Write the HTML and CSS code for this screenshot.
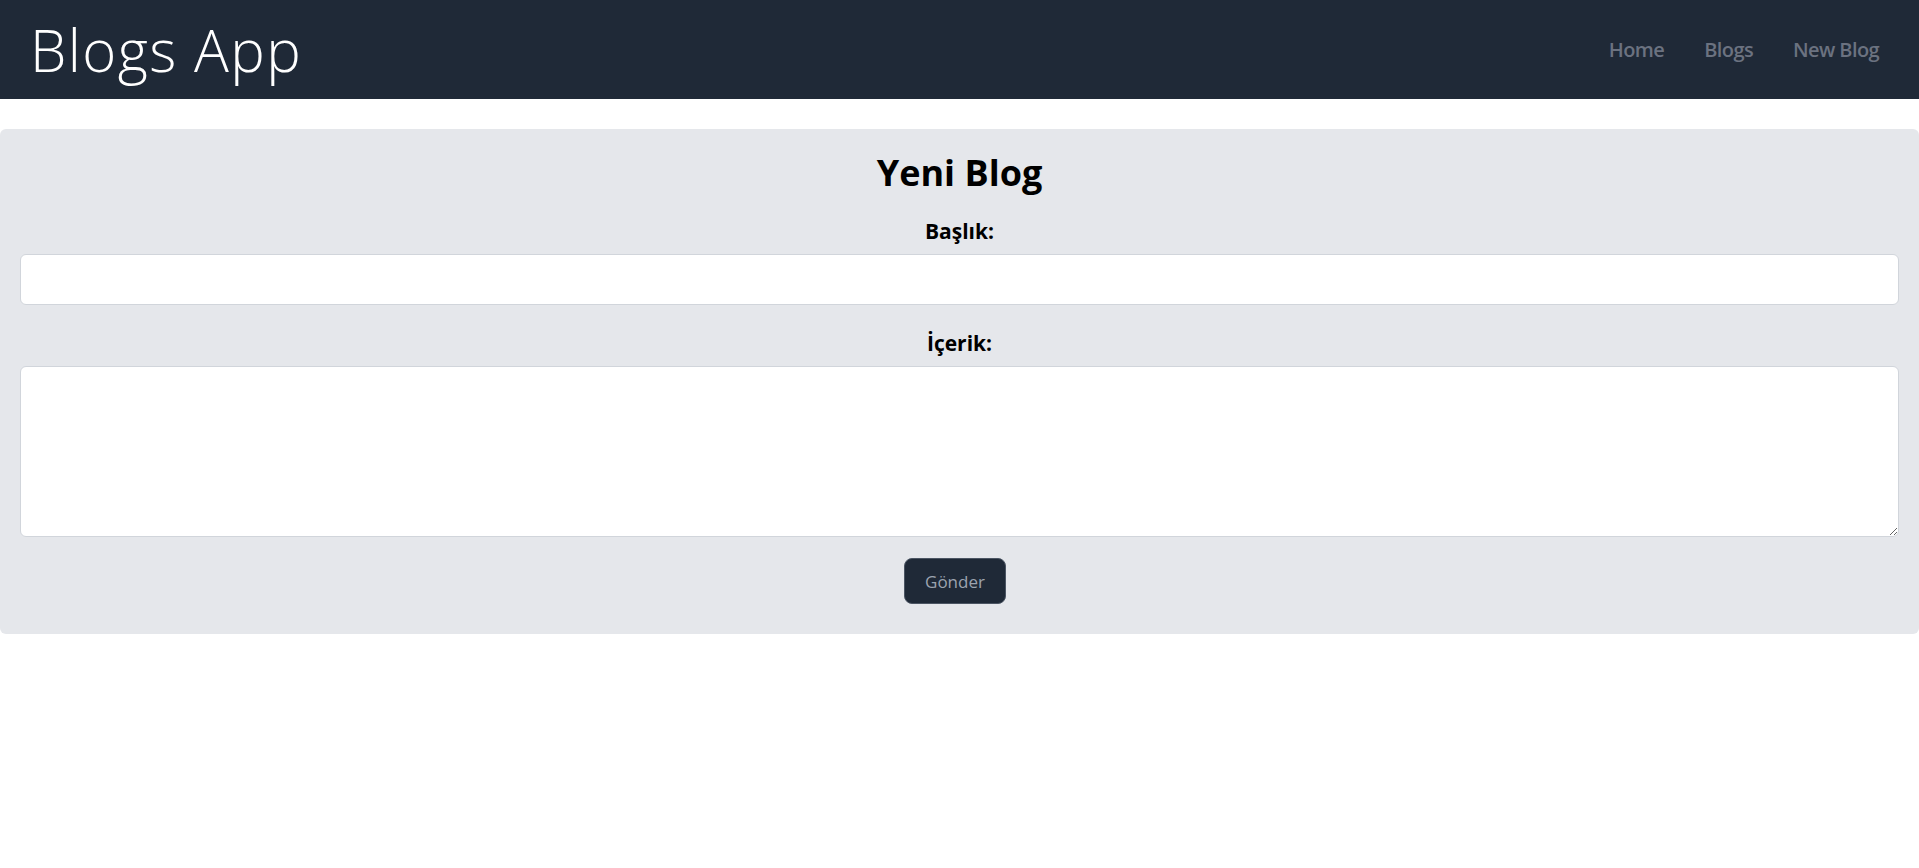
FILE: index.html
```html
<!DOCTYPE html>
<html lang="tr">
<head>
<meta charset="utf-8">
<title>Blogs App</title>
<link rel="stylesheet" href="styles.css">
</head>
<body>
<header class="topbar">
  <div class="brand">Blogs App</div>
  <nav class="nav">
    <a class="nav-link" href="#">Home</a>
    <a class="nav-link" href="#">Blogs</a>
    <a class="nav-link" href="#">New Blog</a>
  </nav>
</header>
<main class="main">
  <form class="card">
    <h1 class="card-title">Yeni Blog</h1>
    <label class="field-label" for="baslik">Başlık:</label>
    <input class="field-input" id="baslik" type="text">
    <label class="field-label field-label-second" for="icerik">İçerik:</label>
    <textarea class="field-textarea" id="icerik"></textarea>
    <button class="submit" type="button">Gönder</button>
  </form>
</main>
</body>
</html>
```
FILE: styles.css
```css
* { box-sizing: border-box; }
html, body { margin: 0; padding: 0; }
body {
  font-family: "Open Sans", "Noto Sans", sans-serif;
  background: #ffffff;
  color: #000;
}
.topbar {
  height: 99px;
  background: #1f2937;
  display: flex;
  align-items: center;
  justify-content: space-between;
  padding: 0 20px 0 30px;
}
.brand {
  color: #ffffff;
  font-size: 58px;
  font-weight: 300;
  line-height: 1;
  letter-spacing: 1.4px;
}
.nav { display: flex; }
.nav-link {
  color: #6b7280;
  text-decoration: none;
  font-size: 20px;
  font-weight: 600;
  padding: 0 20px;
  letter-spacing: -0.6px;
}
.main { padding-top: 30px; }
.card {
  background: #e5e7eb;
  border-radius: 6px;
  padding: 20px 20px 30px;
  display: flex;
  flex-direction: column;
  align-items: center;
}
.card-title {
  margin: 0;
  font-size: 36px;
  line-height: 48px;
  font-weight: 700;
}
.field-label {
  margin-top: 20px;
  font-size: 21px;
  font-weight: 700;
  line-height: 28px;
}
.field-label-second { margin-top: 24px; }
.field-input,
.field-textarea {
  width: 100%;
  margin-top: 9px;
  background: #fff;
  border: 1px solid #d1d5db;
  border-radius: 6px;
  font: inherit;
}
.field-input { height: 51px; }
.field-textarea { height: 171px; resize: vertical; }
.submit {
  margin-top: 21px;
  margin-right: 9px;
  width: 102px;
  height: 46px;
  background: #1f2937;
  color: #9ca3af;
  border: 1px solid #4b5563;
  border-radius: 8px;
  font-family: inherit;
  font-size: 17px;
  font-weight: 500;
}
```
